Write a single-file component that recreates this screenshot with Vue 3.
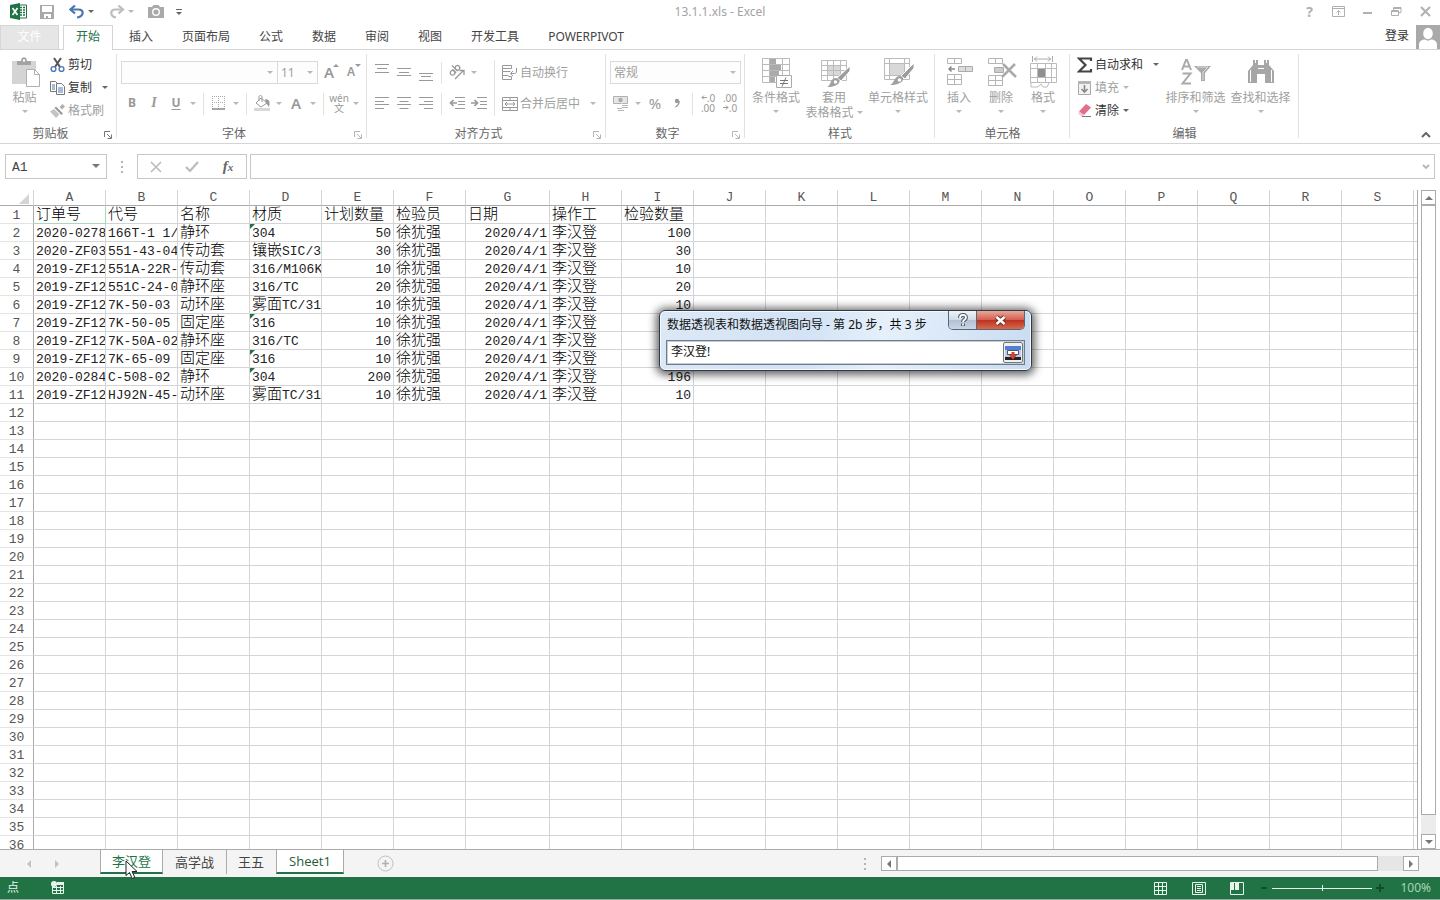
<script setup>
import { ref } from 'vue'

const tabs = ['开始', '插入', '页面布局', '公式', '数据', '审阅', '视图', '开发工具', 'POWERPIVOT']
const columns = 'ABCDEFGHIJKLMNOPQRS'.split('')
const header = ['订单号', '代号', '名称', '材质', '计划数量', '检验员', '日期', '操作工', '检验数量']
const records = [
  ['2020-0278', '166T-1 1/', '静环', '304', '50', '100', true],
  ['2020-ZF03', '551-43-04', '传动套', '镶嵌SIC/3', '30', '30'],
  ['2019-ZF12', '551A-22R-', '传动套', '316/M106K', '10', '10'],
  ['2019-ZF12', '551C-24-0', '静环座', '316/TC', '20', '20'],
  ['2019-ZF12', '7K-50-03', '动环座', '雾面TC/31', '10', '10'],
  ['2019-ZF12', '7K-50-05', '固定座', '316', '10', '10', true],
  ['2019-ZF12', '7K-50A-02', '静环座', '316/TC', '10', '10'],
  ['2019-ZF12', '7K-65-09', '固定座', '316', '10', '10', true],
  ['2020-0284', 'C-508-02', '静环', '304', '200', '196', true],
  ['2019-ZF12', 'HJ92N-45-', '动环座', '雾面TC/31', '10', '10'],
]
const grid = [header, ...records.map(r => [r[0], r[1], r[2], r[3], r[4], '徐犹强', '2020/4/1', '李汉登', r[5]])]
const flagged = new Set(records.map((r, i) => (r[6] ? i + 1 : -1)))

// Split a value into Chinese and Latin runs, which use different type sizes.
const runs = text => (text || '').match(/[\u4e00-\u9fff]+|[^\u4e00-\u9fff]+/g) || []
const isHan = run => /[\u4e00-\u9fff]/.test(run)
const isNumber = (r, c) => r > 0 && (c === 4 || c === 6 || c === 8)

const rangeText = ref('李汉登!')
const nameBox = ref('A1')
const formula = ref('')
const zoom = ref(50)
</script>

<template>
  <div class="app">
    <header class="titlebar">
      <div class="quick">
        <svg class="q-logo" width="17" height="17" viewBox="0 0 17 17"><path d="M8 2h8.500v13H8z" fill="#fff" stroke="#217346" /><path d="M10 4.500h2M13 4.500h2M10 7h2M13 7h2M10 9.500h2M13 9.500h2M10 12h2M13 12h2" stroke="#217346" stroke-width="1.300" /><path d="M0 2 10 0v17L0 15z" fill="#217346" /><path d="m2.500 5 5 7M7.500 5l-5 7" stroke="#fff" stroke-width="1.700" /></svg>
        <button class="q-btn q-save" aria-label="保存"><svg width="14" height="14" viewBox="0 0 14 14"><path d="M0 0h14v14H0z" fill="#a9a9a9" /><path d="M2 1h10v6H2zM4 9h7v4H8v-2H6v2H4z" fill="#fff" /></svg></button>
        <button class="q-btn q-undo" aria-label="撤消"><svg width="16" height="14" viewBox="0 0 16 14"><path d="M2 4.500h7.500c6 0 5.500 7-1.500 8" fill="none" stroke="#4a76ae" stroke-width="2.200" /><path d="M6 .5 1.500 4.500 6 8.500" fill="none" stroke="#4a76ae" stroke-width="2.200" /></svg></button>
        <button class="q-drop" aria-label="撤消列表"><i class="caret dark"></i></button>
        <button class="q-btn q-redo" aria-label="恢复"><svg width="16" height="14" viewBox="0 0 16 14"><path d="M13 4.500H6.500c-6 0-5.500 7 .5 8" fill="none" stroke="#bdbdbd" stroke-width="2.200" /><path d="m9.500.5 4.500 4-4.500 4" fill="none" stroke="#bdbdbd" stroke-width="2.200" /></svg></button>
        <button class="q-drop" aria-label="恢复列表"><i class="caret"></i></button>
        <button class="q-btn q-camera" aria-label="照相机"><svg width="16" height="13" viewBox="0 0 16 13"><path d="M0 2h4l1.500-2h5L12 2h4v11H0z" fill="#a9a9a9" /><circle cx="8" cy="7" r="3.300" fill="#a9a9a9" stroke="#fff" stroke-width="1.400" /></svg></button>
        <button class="q-btn q-custom" aria-label="自定义快速访问工具栏"><svg width="6" height="6" viewBox="0 0 6 6"><path d="M0 .5h6" stroke="#666" /><path d="M0 3h6L3 6z" fill="#666" /></svg></button>
      </div>
      <h1 class="doc-title">13.1.1.xls - Excel</h1>
      <div class="window-tools">
        <button aria-label="帮助" class="help">?</button>
        <button aria-label="功能区显示选项"><svg width="13" height="11" viewBox="0 0 13 11"><path d="M.5.5h12v10H.5zM.5 2.500h12M6.500 9V5M4.500 6.500l2-2 2 2" fill="none" stroke="#b0b0b0" /></svg></button>
        <button aria-label="最小化"><svg width="10" height="11" viewBox="0 0 10 11"><path d="M0 7h9" stroke="#b0b0b0" stroke-width="2" /></svg></button>
        <button aria-label="还原"><svg width="11" height="11" viewBox="0 0 11 11"><path d="M.5 4.500h7v5h-7zM.5 5.500h7M2.500 4V1.500h7.500v5H8M2.500 2.500H10" fill="none" stroke="#b0b0b0" /></svg></button>
        <button aria-label="关闭"><svg width="11" height="11" viewBox="0 0 11 11"><path d="m1 1 9 9M10 1l-9 9" stroke="#b0b0b0" stroke-width="2" /></svg></button>
      </div>
    </header>

    <nav class="tabs">
      <button class="file-tab">文件</button>
      <button v-for="(t, i) in tabs" :key="t" class="tab" :class="{ active: i === 0 }">{{ t }}</button>
      <span class="fill-space"></span>
      <button class="sign-in">登录</button>
      <svg class="avatar" width="24" height="24" viewBox="0 0 24 24"><path d="M0 0h24v24H0z" fill="#a9a9a9" /><ellipse cx="12" cy="8.500" rx="4.800" ry="5.800" fill="#fff" /><path d="M3 24v-4c0-4 3-5.500 6-5.500 2 1.500 4 1.500 6 0 3 0 6 1.500 6 5.500v4z" fill="#fff" /></svg>
    </nav>

    <section class="ribbon">
      <div class="group g-clip">
        <div class="body">
          <button class="big paste">
            <svg width="32" height="32" viewBox="0 0 32 32"><path d="M3 5h24v23H3z" fill="#d4d4d4" /><path d="M8 9V5h4c0-5 6-5 6 0h4v4z" fill="#a3a3a3" /><circle cx="15" cy="4.500" r="1.300" fill="#fff" /><path d="M17.500 13.500h8l5 5v12h-13z" fill="#fff" stroke="#b0b0b0" /><path d="M25.500 13.500v5h5" fill="none" stroke="#b0b0b0" /></svg>
            <span>粘贴</span><i class="caret"></i>
          </button>
          <div class="stack">
            <button class="small on"><svg width="16" height="16" viewBox="0 0 16 16"><path d="m4 1 6 9M11 1 5 10" stroke="#555" stroke-width="2" /><circle cx="3.500" cy="12" r="2.400" fill="none" stroke="#4a7ab5" stroke-width="1.400" /><circle cx="11.500" cy="12" r="2.400" fill="none" stroke="#4a7ab5" stroke-width="1.400" /></svg>剪切</button>
            <button class="small on"><svg width="16" height="16" viewBox="0 0 16 16"><path d="M.5 1.500h5l2 2v8h-7z" fill="#fff" stroke="#777" /><path d="M2 5h3M2 7h3M2 9h3" stroke="#4a7ab5" /><path d="M6.500 3.500h5l3 3v8h-8z" fill="#fff" stroke="#777" /><path d="M8 8h5M8 10h5M8 12h5" stroke="#4a7ab5" /></svg>复制<i class="caret dark wide"></i></button>
            <button class="small"><svg width="16" height="16" viewBox="0 0 16 16"><path d="m12.500 1 2.500 2.500-3 3L9.500 4z" fill="#b0b0b0" /><path d="m6 3.500 7 7-1.500 1.500-7-7z" fill="#999" /><path d="m4 6 5.500 5.500L6 15 0 8.500z" fill="#c4c4c4" /></svg>格式刷</button>
          </div>
        </div>
        <div class="caption">剪贴板<svg class="launch on" width="8" height="8" viewBox="0 0 8 8"><path d="M.5 6V.5H6M3 3l4 4M7.500 3.500v4h-4" fill="none" stroke="currentColor" /></svg></div>
      </div>

      <div class="group g-font">
        <div class="body rows">
          <div class="row">
            <span class="combo font-name"><select aria-label="字体"><option></option></select><i class="caret"></i></span>
            <span class="combo font-size"><select aria-label="字号"><option>11</option></select><i class="caret"></i></span>
            <button class="tool grow" aria-label="增大字号"><b class="letter">A</b><i class="tri up"></i></button>
            <button class="tool grow less" aria-label="减小字号"><b class="letter sm">A</b><i class="tri down"></i></button>
          </div>
          <div class="row">
            <button class="tool"><b>B</b></button>
            <button class="tool"><b class="ital">I</b></button>
            <button class="tool"><b class="under">U</b></button>
            <button class="drop" aria-label="下划线类型"><i class="caret"></i></button>
            <i class="sep"></i>
            <button class="tool" aria-label="边框"><svg width="14" height="14" viewBox="0 0 14 14"><path d="M.5 0v13M6.500 0v13M12.500 0v13M0 .5h13M0 6.500h13" stroke="#aaa" stroke-dasharray="1 1" /><path d="M0 13h13" stroke="#888" stroke-width="1.500" /></svg></button>
            <button class="drop" aria-label="边框类型"><i class="caret"></i></button>
            <i class="sep"></i>
            <button class="tool" aria-label="填充颜色"><svg width="17" height="16" viewBox="0 0 17 16"><path d="m7 3 6 5-6 4-5-4z" fill="#fff" stroke="#999" /><path d="M5 6V2c0-2 3-2 3 0v5" fill="none" stroke="#999" /><path d="M11 4c5 0 5 4 4 8l-3-4z" fill="#999" /><path d="M0 13h16v3H0z" fill="#d8d8d8" /></svg></button>
            <button class="drop" aria-label="填充颜色列表"><i class="caret"></i></button>
            <button class="tool"><b class="letter">A</b></button>
            <button class="drop" aria-label="字体颜色列表"><i class="caret"></i></button>
            <i class="sep"></i>
            <button class="tool pinyin"><span>wén</span><span>文</span></button>
            <button class="drop" aria-label="拼音选项"><i class="caret"></i></button>
          </div>
        </div>
        <div class="caption">字体<svg class="launch" width="8" height="8" viewBox="0 0 8 8"><path d="M.5 6V.5H6M3 3l4 4M7.500 3.500v4h-4" fill="none" stroke="currentColor" /></svg></div>
      </div>

      <div class="group g-align">
        <div class="body">
          <div class="rows">
            <div class="row">
              <button class="tool" aria-label="顶端对齐"><svg width="14" height="18" viewBox="0 0 14 18"><path d="M0 1.500h14M2 5.500h10M0 9.500h14" stroke="#999" /></svg></button>
              <button class="tool" aria-label="垂直居中"><svg width="14" height="18" viewBox="0 0 14 18"><path d="M0 5.500h14M2 9.500h10M0 12.500h14" stroke="#999" /></svg></button>
              <button class="tool" aria-label="底端对齐"><svg width="14" height="18" viewBox="0 0 14 18"><path d="M0 10.500h14M2 13.500h10M0 17.500h14" stroke="#999" /></svg></button>
              <i class="sep"></i>
              <button class="tool orient" aria-label="方向"><svg width="18" height="18" viewBox="0 0 18 18"><g fill="none" stroke="#999" stroke-width="1.300"><g transform="rotate(-45 7 8)"><circle cx="4" cy="7.500" r="2.300" /><path d="M6.500 4.800v5.200M8.800 2v8" /><circle cx="11" cy="7.500" r="2.300" /></g><path d="m7 16 8-8M11.500 7.500H16V12" /></g></svg></button>
              <button class="drop" aria-label="方向列表"><i class="caret"></i></button>
            </div>
            <div class="row">
              <button class="tool" aria-label="左对齐"><svg width="14" height="12" viewBox="0 0 14 12"><path d="M0 .5h14M0 4.500h9M0 7.500h14M0 11.500h9" stroke="#999" /></svg></button>
              <button class="tool" aria-label="居中"><svg width="14" height="12" viewBox="0 0 14 12"><path d="M0 .5h14M2.500 4.500h9M0 7.500h14M2.500 11.500h9" stroke="#999" /></svg></button>
              <button class="tool" aria-label="右对齐"><svg width="14" height="12" viewBox="0 0 14 12"><path d="M0 .5h14M5 4.500h9M0 7.500h14M5 11.500h9" stroke="#999" /></svg></button>
              <i class="sep"></i>
              <button class="tool" aria-label="减少缩进量"><svg width="16" height="12" viewBox="0 0 16 12"><path d="M6 .5h10M9 4.500h7M9 7.500h7M6 11.500h10" stroke="#999" /><path d="M8 6H2M4.500 3 1.500 6l3 3" fill="none" stroke="#999" stroke-width="1.700" /></svg></button>
              <button class="tool" aria-label="增加缩进量"><svg width="16" height="12" viewBox="0 0 16 12"><path d="M6 .5h10M9 4.500h7M9 7.500h7M6 11.500h10" stroke="#999" /><path d="M0 6h6M3.500 3l3 3-3 3" fill="none" stroke="#999" stroke-width="1.700" /></svg></button>
            </div>
          </div>
          <i class="sep tall"></i>
          <div class="rows">
            <div class="row"><button class="small"><svg width="16" height="16" viewBox="0 0 16 16"><path d="M.5.500h9v3h-9zM.5 3.500v11M.5 6.500h8M.5 10.500h6M.5 14.500h9v-3h-3M14.500 3v4c0 1-1 1.500-2 1.500H9M11 6 8.500 8.500 11 11" fill="none" stroke="#999" /></svg>自动换行</button></div>
            <div class="row"><button class="small"><svg width="16" height="16" viewBox="0 0 16 16"><path d="M.5 1.500h15v13H.5zM.5 4.500h15M.5 11.500h15M8 1.500v3M8 11.500v3M3 8h10M5 6 3 8l2 2M11 6l2 2-2 2" fill="none" stroke="#999" /></svg>合并后居中<i class="caret wide"></i></button></div>
          </div>
        </div>
        <div class="caption">对齐方式<svg class="launch" width="8" height="8" viewBox="0 0 8 8"><path d="M.5 6V.5H6M3 3l4 4M7.500 3.500v4h-4" fill="none" stroke="currentColor" /></svg></div>
      </div>

      <div class="group g-num">
        <div class="body rows">
          <div class="row"><span class="combo format"><select aria-label="数字格式"><option>常规</option></select><i class="caret"></i></span></div>
          <div class="row">
            <button class="tool" aria-label="会计数字格式"><svg width="16" height="16" viewBox="0 0 16 16"><path d="M.5 1.500h14v7H.5z" fill="#e6e6e6" stroke="#b0b0b0" /><circle cx="7.500" cy="5" r="2.200" fill="#aaa" /><path d="M8 8.500h7v6H8z" fill="#fff" /><path d="M9 8.500h6M9 10.500h6M9 12.500h6M4 13.500h5M5 15.500h6" stroke="#b5b5b5" /></svg></button>
            <button class="drop" aria-label="会计数字格式列表"><i class="caret"></i></button>
            <button class="tool pct">%</button>
            <button class="tool comma" aria-label="千位分隔样式"><svg width="6" height="10" viewBox="0 0 6 10"><circle cx="3" cy="3" r="2.200" fill="#999" /><path d="M5.200 3c0 3-1.500 5-4 6" fill="none" stroke="#999" stroke-width="1.300" /></svg></button>
            <i class="sep"></i>
            <button class="tool deci"><span><svg width="6" height="5" viewBox="0 0 6 5"><path d="M6 2.500H1M3 .5l-2 2 2 2" fill="none" stroke="#999" /></svg>.0</span><span>.00</span></button>
            <button class="tool deci"><span>.00</span><span><svg width="6" height="5" viewBox="0 0 6 5"><path d="M0 2.500h5M3 .5l2 2-2 2" fill="none" stroke="#999" /></svg>.0</span></button>
          </div>
        </div>
        <div class="caption">数字<svg class="launch" width="8" height="8" viewBox="0 0 8 8"><path d="M.5 6V.5H6M3 3l4 4M7.500 3.500v4h-4" fill="none" stroke="currentColor" /></svg></div>
      </div>

      <div class="group g-style">
        <div class="body">
          <button class="big w1">
            <svg width="32" height="32" viewBox="0 0 32 32"><path d="M2.500 2.500h27v24h-27zM2.500 8.500h27M2.500 14.500h27M2.500 20.500h27M9.500 2.500v24M22.500 2.500v24" fill="#fff" stroke="#bbb" /><path d="M10 3h6v5h-6zM10 9h11v5H10zM10 15h9v5h-9zM10 21h5v5h-5z" fill="#aaa" /><path d="M16.500 19.500h15v12h-15z" fill="#fff" stroke="#aaa" /><path d="M20 24.500h8M20 27.500h8M26 21.500l-4 9" stroke="#777" /></svg>
            <span>条件格式</span><i class="caret"></i>
          </button>
          <button class="big w2">
            <svg width="32" height="32" viewBox="0 0 32 32"><path d="M3.500 4.500h25v20h-25z" fill="#fff" stroke="#bbb" /><path d="M9 9h13v11H9z" fill="#d8d8d8" /><path d="M3.500 9.500h25M3.500 14.500h25M3.500 19.500h25M9.500 4.500v20M15.500 4.500v20M22.500 4.500v20" stroke="#bbb" /><path d="M32 10v5l-9 10-4-3z" fill="#9c9c9c" stroke="#fff" /><path d="M9 31c4-1 3-9 9-9 6 1 5 9-9 9z" fill="#a0a0a0" /><circle cx="17.500" cy="26" r="1.800" fill="#fff" /></svg>
            <span>套用</span><span class="line2">表格格式<i class="caret"></i></span>
          </button>
          <button class="big w3">
            <svg width="32" height="32" viewBox="0 0 32 32"><path d="M2.500 2.500h25v21h-25z" fill="#fff" stroke="#bbb" /><path d="M8 8h14v11H8z" fill="#d8d8d8" /><path d="M2.500 7.500h25M2.500 19.500h25M7.500 2.500v21M22.500 2.500v21" stroke="#bbb" /><path d="M32 7v5l-9 11-4-3z" fill="#9c9c9c" stroke="#fff" /><path d="M8 29c4-1 4-9 10-9 6 1 4 9-10 9z" fill="#a0a0a0" /><circle cx="17.500" cy="24" r="1.800" fill="#fff" /></svg>
            <span>单元格样式</span><i class="caret"></i>
          </button>
        </div>
        <div class="caption">样式</div>
      </div>

      <div class="group g-cells">
        <div class="body">
          <button class="big w4">
            <svg width="32" height="32" viewBox="0 0 32 32"><path d="M4.500 2.500h14v5h-14zM11.500 2.500v5M4.500 18.500h14v10h-14zM11.500 18.500v10M4.500 23.500h14" fill="#fff" stroke="#b5b5b5" /><path d="M15.500 10.500h14v5h-14zM22.500 10.500v5" fill="#ddd" stroke="#aaa" /><path d="M12 13H6M8.500 10.500 6 13l2.500 2.500" fill="none" stroke="#888" stroke-width="1.500" /></svg>
            <span>插入</span><i class="caret"></i>
          </button>
          <button class="big w4">
            <svg width="32" height="32" viewBox="0 0 32 32"><path d="M3.500 2.500h14v5h-14zM10.500 2.500v5M3.500 19.500h14v10h-14zM10.500 19.500v10M3.500 24.500h14" fill="#fff" stroke="#b5b5b5" /><path d="M9.500 11.500h9v5h-9z" fill="#ccc" stroke="#aaa" /><path d="m18 8 13 13M30 8 17 21" stroke="#aaa" stroke-width="2.500" /></svg>
            <span>删除</span><i class="caret"></i>
          </button>
          <button class="big w4">
            <svg width="32" height="32" viewBox="0 0 32 32"><path d="M5.500 0v6M25.500 0v6M7 3h17M10 .5 7.500 3 10 5.500M21 .5 23.500 3 21 5.500" fill="none" stroke="#aaa" /><path d="M3.500 7.500h26v19h-26z" fill="#fff" stroke="#bbb" /><path d="M3.500 12.500h26M3.500 21.500h26M10.500 7.500v19M18.500 7.500v19M24.500 7.500v19" stroke="#bbb" /><path d="M11 13h7v8h-7z" fill="#909090" /><path d="M4 27v4h7l3-3 2 3h4l2-4" fill="none" stroke="#bbb" /></svg>
            <span>格式</span><i class="caret"></i>
          </button>
        </div>
        <div class="caption">单元格</div>
      </div>

      <div class="group g-edit">
        <div class="body">
          <div class="stack">
            <button class="small on"><svg width="16" height="16" viewBox="0 0 16 16"><path d="M14 4V1.500H2L8.500 8 2 14.500h12V12" fill="none" stroke="#444" stroke-width="2.200" /></svg>自动求和<i class="caret dark wide"></i></button>
            <button class="small"><svg width="16" height="16" viewBox="0 0 16 16"><path d="M1.500 1.500h12v13h-12z" fill="#f2f2f2" stroke="#aaa" /><path d="M1 1h13v3H1z" fill="#b5b5b5" /><path d="M7.500 5v7M4.500 9l3 3 3-3" fill="none" stroke="#888" stroke-width="1.600" /></svg>填充<i class="caret"></i></button>
            <button class="small on"><svg width="16" height="16" viewBox="0 0 16 16"><path d="m9 1 5 3.500-7 7.500L2 8.500z" fill="#e0708c" /><path d="m2 8.500 5 3.500-1.500 2-4-3z" fill="#f4c4d0" /><path d="M5 13.500h9" stroke="#777" /></svg>清除<i class="caret dark"></i></button>
          </div>
          <button class="big w5">
            <svg width="32" height="32" viewBox="0 0 32 32"><path d="m2 14 4-10h1l4 10M3.500 10.500h6M2.500 17.500h8l-8 10h8.500" fill="none" stroke="#aaa" stroke-width="2" /><path d="M14 10h17l-6 7v8h-4v-8z" fill="#aaa" /><path d="M17 11h11l-5 5v8" fill="none" stroke="#ddd" /></svg>
            <span>排序和筛选</span><i class="caret"></i>
          </button>
          <button class="big w5">
            <svg width="32" height="32" viewBox="0 0 32 32"><path d="M8 4h5v5h6V4h5v5l5 6v12h-9v-9h-8v9H3V15l5-6z" fill="#a6a6a6" /><path d="M5.500 14v12M26.500 14v12M10.500 4v3M21.500 4v3M13 12.500h6" fill="none" stroke="#fff" /></svg>
            <span>查找和选择</span><i class="caret"></i>
          </button>
        </div>
        <div class="caption">编辑</div>
      </div>
      <button class="collapse" aria-label="折叠功能区"><svg width="10" height="6" viewBox="0 0 10 6"><path d="m1 5 4-4 4 4" fill="none" stroke="#666" stroke-width="2" /></svg></button>
    </section>

    <section class="formula-bar">
      <div class="name-box"><input v-model="nameBox" aria-label="名称框"><button class="drop" aria-label="名称列表"><i class="caret big-caret"></i></button></div>
      <i class="dots"></i>
      <div class="fx-box">
        <button aria-label="取消"><svg width="12" height="12" viewBox="0 0 12 12"><path d="m1 1 10 10M11 1 1 11" stroke="#bbb" stroke-width="1.600" /></svg></button>
        <button aria-label="输入"><svg width="14" height="12" viewBox="0 0 14 12"><path d="m1 6 4 4 8-9" fill="none" stroke="#bbb" stroke-width="2.200" /></svg></button>
        <button class="fx" aria-label="插入函数">f<sub>x</sub></button>
      </div>
      <div class="formula"><input v-model="formula" aria-label="编辑栏"><svg width="8" height="6" viewBox="0 0 8 6"><path d="m1 1 3 3 3-3" fill="none" stroke="#b5b5b5" stroke-width="1.800" /></svg></div>
    </section>

    <main class="workspace">
      <div class="sheet">
        <table>
          <colgroup><col class="c-row"><col v-for="c in columns" :key="c" :class="c === 'G' ? 'c-date' : 'c-std'"><col></colgroup>
          <thead><tr><th class="corner"><svg width="10" height="10" viewBox="0 0 10 10"><path d="M10 0v10H0z" fill="#d4d4d4" /></svg></th><th v-for="c in columns" :key="c">{{ c }}</th><th></th></tr></thead>
          <tbody>
            <tr v-for="r in 36" :key="r">
              <th>{{ r }}</th>
              <td v-for="(c, i) in columns" :key="c" :class="{ num: isNumber(r - 1, i), flag: i === 3 && flagged.has(r - 1), picked: r === 1 && i === 0 }"><span v-for="(run, k) in runs(grid[r - 1]?.[i])" :key="k" :class="{ han: isHan(run) }">{{ run }}</span></td>
              <td></td>
            </tr>
          </tbody>
        </table>
      </div>
      <div class="vscroll">
        <button aria-label="向上滚动"><i class="arrow a-up"></i></button>
        <div class="thumb"></div>
        <div class="track"></div>
        <button aria-label="向下滚动"><i class="arrow a-down"></i></button>
      </div>

      <div class="dialog" role="dialog" aria-labelledby="wizard-title">
        <div class="dialog-head">
          <label id="wizard-title" for="wizard-range">数据透视表和数据透视图向导 - 第 2b 步，共 3 步</label>
          <div class="dialog-buttons">
            <button class="d-help" aria-label="帮助"><svg width="12" height="14" viewBox="0 0 12 14"><path d="M3 5c0-4 6-4 6-.5C9 7 6 6.500 6 9M6 10.500v2.500" fill="none" stroke="#555d6b" stroke-width="4" /><path d="M3 5c0-4 6-4 6-.5C9 7 6 6.500 6 9M6 10.500v2" fill="none" stroke="#fff" stroke-width="1.800" /></svg></button>
            <button class="d-close" aria-label="关闭"><svg width="13" height="11" viewBox="0 0 13 11"><path d="m2.500 2 8 7M10.500 2l-8 7" stroke="#6d2a24" stroke-width="4.500" /><path d="m2.500 2 8 7M10.500 2l-8 7" stroke="#fff" stroke-width="2.500" /></svg></button>
          </div>
        </div>
        <div class="range">
          <input id="wizard-range" v-model="rangeText">
          <button aria-label="展开对话框"><svg width="16" height="14" viewBox="0 0 16 14"><path d="M0 0h16v14H0z" fill="#222" /><path d="M0 0h16v4H0z" fill="#4f7fd8" /><path d="M0 4h16v7H0z" fill="#b9cdf0" /><path d="M2.500 4.500h11v4h-11z" fill="#fff" stroke="#555" /><path d="M6.500 6h3v3H12l-4 4.500L4 9h2.500z" fill="#d8402a" /></svg></button>
        </div>
      </div>
    </main>

    <section class="sheet-bar">
      <button class="nav-btn" aria-label="上一张工作表"><i class="arrow a-left pale"></i></button>
      <button class="nav-btn" aria-label="下一张工作表"><i class="arrow a-right pale"></i></button>
      <div class="sheet-tabs">
        <button class="sheet-tab sel green">李汉登</button>
        <button class="sheet-tab line">高学战</button>
        <button class="sheet-tab third">王五</button>
        <button class="sheet-tab sel second">Sheet1</button>
      </div>
      <button class="add" aria-label="新工作表"><svg width="17" height="17" viewBox="0 0 17 17"><circle cx="8.500" cy="8.500" r="7.500" fill="none" stroke="#c0c0c0" /><path d="M8.500 5v7M5 8.500h7" stroke="#b0b0b0" stroke-width="1.600" /></svg></button>
      <span class="fill-space"></span>
      <i class="dots"></i>
      <div class="hscroll">
        <button aria-label="向左滚动"><i class="arrow a-left"></i></button>
        <div class="thumb"></div>
        <div class="track"></div>
        <button aria-label="向右滚动"><i class="arrow a-right"></i></button>
      </div>
      <svg class="pointer" width="14" height="20" viewBox="0 0 14 20"><path d="M1 1v14.500l3.500-3 2.700 6 2.600-1.200-2.700-5.800H12z" fill="#fff" stroke="#222" /></svg>
    </section>

    <footer class="status">
      <span>点</span>
      <svg class="macro" width="14" height="14" viewBox="0 0 14 14"><path d="M1.500 2.500h11v10h-11z" fill="none" stroke="#e6f3ea" /><path d="M6 1h7v3H6z" fill="#e6f3ea" /><path d="M2 6.500h11M2 9.500h11M5.500 5v8M9.500 5v8" stroke="#e6f3ea" /><circle cx="3" cy="3" r="3" fill="#e6f3ea" /></svg>
      <span class="fill-space"></span>
      <button class="view" aria-label="普通"><svg width="14" height="13" viewBox="0 0 14 13"><path d="M.5.500h12v12H.5zM.5 4.500h12M.5 8.500h12M4.500.5v12M8.500.5v12" fill="none" stroke="#e8f5ec" /></svg></button>
      <button class="view" aria-label="页面布局"><svg width="14" height="13" viewBox="0 0 14 13"><path d="M.5.500h13v12H.5zM3.500 2.500h7v8h-7zM5 4.500h4M5 6.500h4M5 8.500h4" fill="none" stroke="#e8f5ec" /></svg></button>
      <button class="view" aria-label="分页预览"><svg width="14" height="13" viewBox="0 0 14 13"><path d="M.5.500h13v12H.5z" fill="none" stroke="#e8f5ec" /><path d="M1 1h3v7H1zM5 1h4v7H5z" fill="#e8f5ec" /></svg></button>
      <button class="zoom-btn" aria-label="缩小"><svg width="8" height="8" viewBox="0 0 8 8"><path d="M1 4h6" stroke="#0e4f2a" stroke-width="2" /></svg></button>
      <input v-model="zoom" class="zoom" type="range" min="0" max="100" aria-label="显示比例">
      <button class="zoom-btn" aria-label="放大"><svg width="8" height="8" viewBox="0 0 8 8"><path d="M0 4h8M4 0v8" stroke="#0e4f2a" stroke-width="2" /></svg></button>
      <span class="percent">100%</span>
    </footer>
  </div>
</template>

<style>
body { margin: 0; background: #fff; overflow: hidden; }
</style>

<style scoped>
.app { display: flex; flex-direction: column; height: 100vh; font: 12px/16px "Noto Sans", "Noto Sans CJK SC", sans-serif; color: #444; }
.app * { box-sizing: border-box; }
button { margin: 0; padding: 0; border: 0; background: none; font: inherit; color: inherit; display: flex; align-items: center; justify-content: center; white-space: nowrap; flex-shrink: 0; }
input, select { font: inherit; color: inherit; border: 0; outline: 0; background: none; margin: 0; padding: 0; min-width: 0; }
svg { display: block; flex-shrink: 0; }
.fill-space { flex: 1; }
.caret { display: block; width: 0; height: 0; border: 3px solid transparent; border-top-color: #b8b8b8; border-bottom: 0; flex-shrink: 0; }
.caret.dark { border-top-color: #666; }

.titlebar { display: grid; grid-template-columns: 1fr auto 1fr; height: 25px; padding-bottom: 2px; }
.quick { display: flex; align-items: center; padding-left: 10px; }
.q-save { margin-left: 13px; }
.q-undo { margin-left: 15px; }
.q-redo { margin-left: 12px; }
.q-drop { width: 12px; height: 16px; }
.q-camera { margin-left: 11px; }
.q-custom { margin-left: 12px; }
.doc-title { margin: 0; font-size: 12px; font-weight: 400; line-height: 23px; color: #a3a3a3; }
.window-tools { display: flex; justify-content: flex-end; align-items: center; }
.window-tools button { width: 29px; height: 23px; }
.window-tools .help { font-size: 14px; font-weight: 700; color: #b0b0b0; }

.tabs { display: flex; height: 25px; border-bottom: 1px solid #d4d4d4; gap: 3px; }
.file-tab { width: 59px; height: 24px; margin-right: 1px; background: #e6e6e6; border: 1px solid #d6d6d6; border-bottom: 0; color: #fff; padding-bottom: 1px; }
.tab { height: 25px; padding: 0 12px 2px; border: 1px solid transparent; border-bottom: 0; }
.tab.active { color: #217346; background: #fff; border-color: #d4d4d4; }
.sign-in { color: #333; padding: 0 4px 3px; }

.ribbon { display: flex; height: 94px; border-bottom: 1px solid #d4d4d4; position: relative; }
.group { display: flex; flex-direction: column; position: relative; flex-shrink: 0; }
.group::after { content: ""; position: absolute; right: 0; top: 4px; bottom: 5px; width: 1px; background: #e2e2e2; }
.g-clip { width: 117px; }
.g-font { width: 250px; }
.g-align { width: 239px; }
.g-num { width: 139px; }
.g-style { width: 190px; }
.g-cells { width: 135px; }
.g-edit { width: 229px; }
.body { display: flex; height: 73px; padding: 0 3px; }
.rows { display: flex; flex-direction: column; padding-top: 7px; }
.g-font .body, .g-num .body, .g-align .body { padding-left: 4px; }
.row { display: flex; align-items: center; height: 31px; }
.caption { position: relative; height: 20px; line-height: 22px; text-align: center; color: #666; padding-right: 16px; }
.g-style .caption, .g-cells .caption, .g-edit .caption { padding-right: 0; }
.launch { position: absolute; right: 5px; bottom: 4px; color: #b5b5b5; }
.launch.on { color: #777; }
.stack { display: flex; flex-direction: column; padding-top: 3px; }
.small { height: 23px; gap: 2px; color: #a0a0a0; justify-content: flex-start; }
.small.on { color: #333; }
.small .caret { margin-left: 2px; }
.small .caret.wide { margin-left: 8px; }
.g-clip .stack { padding-left: 4px; }
.g-align .small { padding-left: 3px; }
.g-edit .stack { width: 90px; padding-left: 4px; }
.big { flex-direction: column; justify-content: flex-start; align-self: flex-start; padding-top: 6px; color: #a0a0a0; line-height: 15px; }
.big > span { margin-top: 2px; }
.big > .caret { margin-top: 5px; }
.big .line2 { display: flex; align-items: center; gap: 3px; margin-top: 0; }
.paste { width: 43px; }
.w1 { width: 56px; }
.w2 { width: 60px; }
.w3 { width: 68px; }
.w4 { width: 42px; }
.w5 { width: 65px; }
.tool { width: 22px; height: 24px; padding-bottom: 2px; color: #999; position: relative; }
.tool b { font-weight: 700; line-height: 16px; }
.tool .ital { font-family: "Liberation Serif", serif; font-style: italic; font-size: 14px; }
.tool .under { text-decoration: underline; text-underline-offset: 2px; }
.tool .letter { font-size: 15px; font-weight: 600; }
.tool .letter.sm { font-size: 12px; }
.tri { position: absolute; right: 1px; top: 3px; border: 3px solid transparent; }
.tri.up { border-top: 0; border-bottom-color: #999; }
.tri.down { border-bottom: 0; border-top-color: #999; }
.drop { width: 12px; height: 22px; }
.sep { width: 1px; height: 22px; background: #e2e2e2; margin: 0 4px; flex-shrink: 0; }
.sep.tall { height: 56px; margin-top: 10px; }
.pinyin { flex-direction: column; font-size: 10px; line-height: 10px; }
.pct { font-size: 15px; }
.deci { flex-direction: column; font-size: 10px; line-height: 10px; }
.deci span { display: flex; align-items: center; }
.combo { position: relative; display: flex; height: 23px; border: 1px solid #dadada; background: #fdfdfd; color: #a0a0a0; }
.combo select { appearance: none; width: 100%; padding: 0 3px; }
.combo .caret { position: absolute; right: 4px; top: 9px; }
.font-name { width: 157px; }
.font-size { width: 40px; border-left: 0; }
.format { width: 131px; }
.collapse { position: absolute; right: 9px; bottom: 5px; }

.formula-bar { display: flex; height: 36px; padding: 10px 5px 1px; align-items: stretch; }
.name-box { display: flex; width: 102px; border: 1px solid #c6c6c6; font: 13px "Liberation Mono", monospace; }
.name-box input { flex: 1; padding: 2px 0 0 6px; }
.name-box .drop { width: 20px; }
.big-caret { border-width: 4px 4px 0; border-top-color: #777; }
.dots { width: 2px; height: 12px; align-self: center; background: repeating-linear-gradient(#b5b5b5 0 2px, transparent 2px 5px); }
.formula-bar .dots { margin: 0 14px; }
.fx-box { display: flex; width: 110px; border: 1px solid #c6c6c6; }
.fx-box button { width: 36px; }
.fx { font: italic 700 15px "Liberation Serif", serif; color: #666; }
.fx sub { font-size: 11px; line-height: 12px; }
.formula { display: flex; flex: 1; margin-left: 3px; border: 1px solid #c6c6c6; align-items: center; padding-right: 4px; }
.formula input { flex: 1; padding-left: 6px; }

.workspace { position: relative; display: flex; flex: 1; min-height: 0; padding-top: 4px; }
.sheet { flex: 1; overflow: hidden; min-width: 0; margin-top: 6px; border-right: 1px solid #ababab; }
table { width: 100%; table-layout: fixed; border-collapse: separate; border-spacing: 0; font: 13px/15px "Liberation Mono", "Noto Sans CJK SC", monospace; }
.c-row { width: 34px; }
.c-std { width: 72px; }
.c-date { width: 84px; }
th, td { height: 18px; padding: 2px 0 0; overflow: hidden; white-space: nowrap; border-right: 1px solid #d4d4d4; border-bottom: 1px solid #d4d4d4; }
th { font-weight: 400; color: #555; text-align: center; }
thead th { height: 16px; line-height: 14px; padding-top: 1px; border-bottom-color: #ababab; }
.corner svg { margin: 2px 4px 0 auto; }
tbody th { border-right-color: #ababab; border-bottom-color: #e4e4e4; }
td { position: relative; padding: 2px 2px 0; color: #222; }
td:last-child, thead th:last-child { border-right: 0; }
.num { text-align: right; }
td span { display: inline-block; vertical-align: top; line-height: 15px; }
.han { font-size: 15px; font-weight: 300; line-height: 15px; color: #000; }
.flag::before { content: ""; position: absolute; left: 0; top: 0; border-top: 5px solid #217346; border-right: 5px solid transparent; }
.picked { border-color: #a9d8bd; }
.vscroll { width: 15px; margin: 0 4px 0 3px; display: flex; flex-direction: column; padding-top: 6px; }
.vscroll button { width: 15px; height: 15px; border: 1px solid #ababab; background: #fff; }
.vscroll .thumb { flex: 97; border: 1px solid #ababab; }
.vscroll .track { flex: 3; background: #ececec; }
.arrow { width: 0; height: 0; border: 4px solid transparent; }
.a-up { border-top: 0; border-bottom-color: #777; }
.a-down { border-bottom: 0; border-top-color: #777; }
.a-left { border-left: 0; border-right-color: #777; }
.a-right { border-right: 0; border-left-color: #777; }
.a-left.pale { border-right-color: #c3c3c3; }
.a-right.pale { border-left-color: #c3c3c3; }

.dialog { position: absolute; left: 659px; top: 130px; width: 373px; height: 61px; border: 1px solid #2f3a46; border-radius: 6px; background: linear-gradient(100deg, #dbe8f6, #d3e3f5 40%, #e6f0fb 60%, #c9dcf1); box-shadow: inset 0 0 0 1px #f4f9ff, 0 1px 9px 3px rgba(0, 0, 0, .6); padding: 0 6px 6px; color: #111; }
.dialog-head { display: flex; justify-content: space-between; height: 29px; }
.dialog-head label { line-height: 27px; padding-left: 1px; white-space: nowrap; }
.dialog-buttons { display: flex; height: 19px; border: 1px solid #5b6673; border-top: 0; border-radius: 0 0 5px 5px; overflow: hidden; }
.d-help { width: 28px; background: linear-gradient(#eef3f9, #d0dbe8 48%, #b2c1d3 52%, #c8d6e6); border-right: 1px solid #5b6673; }
.d-close { width: 47px; background: linear-gradient(#e9a79c, #d4604f 48%, #bc3322 52%, #d66a4c); }
.range { display: flex; height: 25px; background: #fff; border: 1px solid #6f7b88; box-shadow: inset 0 0 0 1px #c5ced8; align-items: center; padding-right: 1px; }
.range input { flex: 1; padding: 0 0 2px 4px; }
.range button { width: 20px; height: 21px; border: 1px solid #777; border-radius: 2px; background: #f0f0f0; }

.sheet-bar { position: relative; display: flex; height: 28px; background: #f4f4f4; border-top: 1px solid #ababab; font-size: 13px; align-items: center; padding: 0 21px 0 15px; }
.nav-btn { width: 28px; height: 24px; }
.sheet-tabs { display: flex; align-self: flex-start; margin-left: 29px; }
.sheet-tab { height: 24px; padding: 0 12px; }
.sheet-tab.sel { background: #fff; border: 1px solid #ababab; border-top: 0; border-bottom: 2px solid #217346; padding: 0 11px; }
.sheet-tab.green { color: #217346; }
.sheet-tab.third { padding: 0 12px 0 11px; }
.sheet-tab.second { color: #1e5c3a; padding: 0 12px; font-family: "Open Sans", sans-serif; }
.sheet-tab.line { border-right: 1px solid #ababab; }
.add { margin-left: 33px; }
.hscroll { display: flex; width: 538px; margin-left: 15px; height: 15px; }
.hscroll button { width: 16px; height: 15px; border: 1px solid #ababab; background: #fff; }
.hscroll .thumb { flex: 95; border: 1px solid #ababab; background: #fff; }
.hscroll .track { flex: 5; background: #e6e6e6; }
.pointer { position: absolute; left: 125px; top: 10px; }

.status { display: flex; align-items: center; height: 23px; background: #217346; border-bottom: 1px solid #9aa59e; color: #e6f3ea; padding: 0 9px 0 7px; }
.macro { margin-left: 32px; }
.view { width: 38px; height: 20px; }
.zoom-btn { width: 16px; height: 20px; }
.zoom { appearance: none; width: 100px; height: 8px; background: linear-gradient(#e6f3ea, #e6f3ea) center / 100% 1px no-repeat; }
.zoom::-webkit-slider-thumb { appearance: none; width: 1px; height: 6px; background: #e6f3ea; }
.percent { width: 43px; text-align: right; color: #a7d3b7; }
</style>
